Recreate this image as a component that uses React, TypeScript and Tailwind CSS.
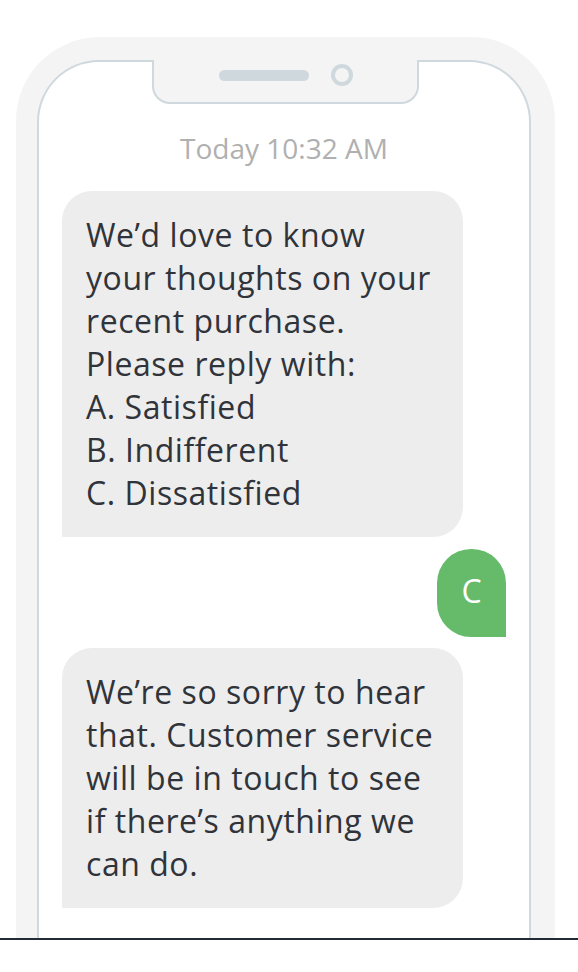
import React from 'react';

const font = "font-['Open_Sans','Noto_Sans',sans-serif]";

const Bubble: React.FC<{ lines: string[] }> = ({ lines }) => (
  <div className="w-[401px] rounded-[30px] rounded-bl-none bg-[#ededed] px-6 pt-[22px] pb-[23px] text-[32px] leading-[43px] tracking-[0.55px] text-[#30343a]">
    {lines.map((l) => (
      <div key={l} className="whitespace-nowrap">{l}</div>
    ))}
  </div>
);

export default function App() {
  return (
    <div className={`h-[972px] bg-white ${font}`}>
      <div className="h-[940px] overflow-hidden border-b-2 border-[#222a35] pl-4 pt-[37px]">
        <div className="h-[920px] w-[539px] rounded-t-[84px] bg-[#f4f4f4] pl-[21px] pr-[24px] pt-[23px]">
          <div className="relative h-full rounded-t-[62px] border-2 border-b-0 border-[#cfd8dc] bg-white px-[23px] pt-[68px]">
            {/* notch */}
            <div className="absolute -top-[2px] left-[113px] flex h-[44px] w-[267px] items-center justify-center gap-[22px] rounded-b-[18px] border-2 border-t-0 border-[#cfd8dc] bg-[#f4f4f4] pb-[12px]">
              <div className="h-[11px] w-[90px] rounded-full bg-[#cfd8dc]" />
              <div className="h-[22px] w-[22px] rounded-full border-[4px] border-[#cfd8dc]" />
            </div>

            <div className="text-center text-[28px] leading-[36px] text-[#b0b0b0]">Today 10:32 AM</div>

            <div className="mt-[25px] flex flex-col gap-[12px]">
              <Bubble
                lines={[
                  'We’d love to know',
                  'your thoughts on your',
                  'recent purchase.',
                  'Please reply with:',
                  'A. Satisfied',
                  'B. Indifferent',
                  'C. Dissatisfied',
                ]}
              />
              <div className="flex justify-end">
                <div className="flex h-[88px] w-[69px] items-center justify-center rounded-[34px] rounded-br-none bg-[#66bb6a] pb-[4px] text-[32px] text-white">
                  C
                </div>
              </div>
              <div className="-mt-px">
                <Bubble
                  lines={[
                    'We’re so sorry to hear',
                    'that. Customer service',
                    'will be in touch to see',
                    'if there’s anything we',
                    'can do.',
                  ]}
                />
              </div>
            </div>
          </div>
        </div>
      </div>
    </div>
  );
}
